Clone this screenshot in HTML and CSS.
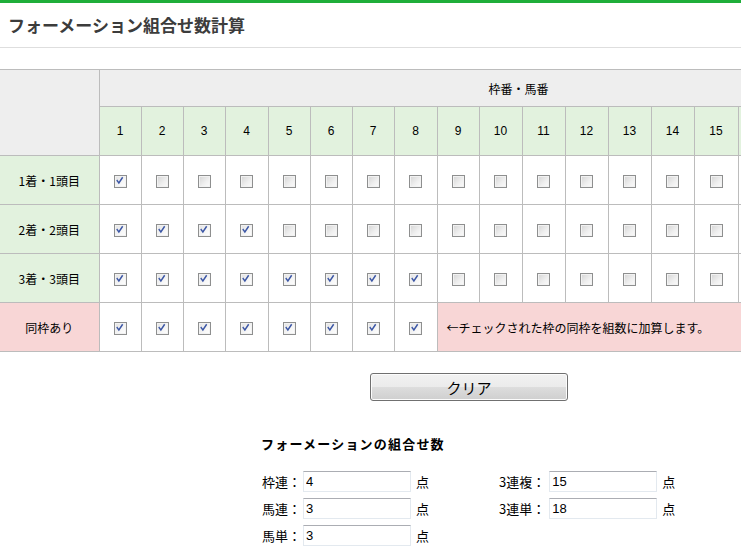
FILE: index.html
```html
<!DOCTYPE html>
<html lang="ja">
<head>
<meta charset="utf-8">
<title>フォーメーション組合せ数計算</title>
<link rel="stylesheet" href="styles.css">
</head>
<body>
<div class="topbar"></div>
<header class="page-head"><h1>フォーメーション組合せ数計算</h1></header>
<main class="page">
  <table class="grid">
    <colgroup>
      <col class="c-label">
      <col class="w42"><col class="w42"><col class="w42"><col class="w43"><col class="w42">
      <col class="w42"><col class="w42"><col class="w43"><col class="w42"><col class="w43">
      <col class="w43"><col class="w43"><col class="w43"><col class="w43"><col class="w44">
      <col class="c-extra"><col class="c-extra"><col class="c-extra">
    </colgroup>
    <thead>
      <tr class="r-head">
        <th class="corner" rowspan="2"></th>
        <th class="caption" colspan="18">枠番・馬番</th>
      </tr>
      <tr class="r-nums">
        <th>1</th><th>2</th><th>3</th><th>4</th><th>5</th><th>6</th><th>7</th><th>8</th><th>9</th>
        <th>10</th><th>11</th><th>12</th><th>13</th><th>14</th><th>15</th><th>16</th><th>17</th><th>18</th>
      </tr>
    </thead>
    <tbody>
      <tr class="r-data">
        <th class="lbl">1着・1頭目</th>
        <td><span class="cb on"><svg viewBox="0 0 13 13"><path d="M3.6 6.4 L5.6 9.2 L9.6 3.2"/></svg></span></td>
        <td><span class="cb"></span></td><td><span class="cb"></span></td><td><span class="cb"></span></td>
        <td><span class="cb"></span></td><td><span class="cb"></span></td><td><span class="cb"></span></td>
        <td><span class="cb"></span></td><td><span class="cb"></span></td><td><span class="cb"></span></td>
        <td><span class="cb"></span></td><td><span class="cb"></span></td><td><span class="cb"></span></td>
        <td><span class="cb"></span></td><td><span class="cb"></span></td><td><span class="cb"></span></td>
        <td><span class="cb"></span></td><td><span class="cb"></span></td>
      </tr>
      <tr class="r-data">
        <th class="lbl">2着・2頭目</th>
        <td><span class="cb on"><svg viewBox="0 0 13 13"><path d="M3.6 6.4 L5.6 9.2 L9.6 3.2"/></svg></span></td>
        <td><span class="cb on"><svg viewBox="0 0 13 13"><path d="M3.6 6.4 L5.6 9.2 L9.6 3.2"/></svg></span></td>
        <td><span class="cb on"><svg viewBox="0 0 13 13"><path d="M3.6 6.4 L5.6 9.2 L9.6 3.2"/></svg></span></td>
        <td><span class="cb on"><svg viewBox="0 0 13 13"><path d="M3.6 6.4 L5.6 9.2 L9.6 3.2"/></svg></span></td>
        <td><span class="cb"></span></td><td><span class="cb"></span></td><td><span class="cb"></span></td>
        <td><span class="cb"></span></td><td><span class="cb"></span></td><td><span class="cb"></span></td>
        <td><span class="cb"></span></td><td><span class="cb"></span></td><td><span class="cb"></span></td>
        <td><span class="cb"></span></td><td><span class="cb"></span></td><td><span class="cb"></span></td>
        <td><span class="cb"></span></td><td><span class="cb"></span></td>
      </tr>
      <tr class="r-data">
        <th class="lbl">3着・3頭目</th>
        <td><span class="cb on"><svg viewBox="0 0 13 13"><path d="M3.6 6.4 L5.6 9.2 L9.6 3.2"/></svg></span></td>
        <td><span class="cb on"><svg viewBox="0 0 13 13"><path d="M3.6 6.4 L5.6 9.2 L9.6 3.2"/></svg></span></td>
        <td><span class="cb on"><svg viewBox="0 0 13 13"><path d="M3.6 6.4 L5.6 9.2 L9.6 3.2"/></svg></span></td>
        <td><span class="cb on"><svg viewBox="0 0 13 13"><path d="M3.6 6.4 L5.6 9.2 L9.6 3.2"/></svg></span></td>
        <td><span class="cb on"><svg viewBox="0 0 13 13"><path d="M3.6 6.4 L5.6 9.2 L9.6 3.2"/></svg></span></td>
        <td><span class="cb on"><svg viewBox="0 0 13 13"><path d="M3.6 6.4 L5.6 9.2 L9.6 3.2"/></svg></span></td>
        <td><span class="cb on"><svg viewBox="0 0 13 13"><path d="M3.6 6.4 L5.6 9.2 L9.6 3.2"/></svg></span></td>
        <td><span class="cb on"><svg viewBox="0 0 13 13"><path d="M3.6 6.4 L5.6 9.2 L9.6 3.2"/></svg></span></td>
        <td><span class="cb"></span></td><td><span class="cb"></span></td><td><span class="cb"></span></td>
        <td><span class="cb"></span></td><td><span class="cb"></span></td><td><span class="cb"></span></td>
        <td><span class="cb"></span></td><td><span class="cb"></span></td><td><span class="cb"></span></td>
        <td><span class="cb"></span></td>
      </tr>
      <tr class="r-data">
        <th class="lbl same">同枠あり</th>
        <td><span class="cb on"><svg viewBox="0 0 13 13"><path d="M3.6 6.4 L5.6 9.2 L9.6 3.2"/></svg></span></td>
        <td><span class="cb on"><svg viewBox="0 0 13 13"><path d="M3.6 6.4 L5.6 9.2 L9.6 3.2"/></svg></span></td>
        <td><span class="cb on"><svg viewBox="0 0 13 13"><path d="M3.6 6.4 L5.6 9.2 L9.6 3.2"/></svg></span></td>
        <td><span class="cb on"><svg viewBox="0 0 13 13"><path d="M3.6 6.4 L5.6 9.2 L9.6 3.2"/></svg></span></td>
        <td><span class="cb on"><svg viewBox="0 0 13 13"><path d="M3.6 6.4 L5.6 9.2 L9.6 3.2"/></svg></span></td>
        <td><span class="cb on"><svg viewBox="0 0 13 13"><path d="M3.6 6.4 L5.6 9.2 L9.6 3.2"/></svg></span></td>
        <td><span class="cb on"><svg viewBox="0 0 13 13"><path d="M3.6 6.4 L5.6 9.2 L9.6 3.2"/></svg></span></td>
        <td><span class="cb on"><svg viewBox="0 0 13 13"><path d="M3.6 6.4 L5.6 9.2 L9.6 3.2"/></svg></span></td>
        <td class="note" colspan="10">←チェックされた枠の同枠を組数に加算します。</td>
      </tr>
    </tbody>
  </table>

  <div class="actions"><button class="btn" type="button">クリア</button></div>

  <section class="result">
    <h2>フォーメーションの組合せ数</h2>
    <div class="fields">
      <div class="field"><span class="f-label">枠連：</span><input class="f-input" value="4"><span class="unit">点</span></div>
      <div class="field alt"><span class="f-label">3連複：</span><input class="f-input" value="15"><span class="unit">点</span></div>
      <div class="field"><span class="f-label">馬連：</span><input class="f-input" value="3"><span class="unit">点</span></div>
      <div class="field alt"><span class="f-label">3連単：</span><input class="f-input" value="18"><span class="unit">点</span></div>
      <div class="field"><span class="f-label">馬単：</span><input class="f-input" value="3"><span class="unit">点</span></div>
    </div>
  </section>
</main>
</body>
</html>
```

FILE: styles.css
```css
html, body {
  margin: 0;
  padding: 0;
}
body {
  width: 741px;
  height: 553px;
  overflow: hidden;
  background: #fff;
  color: #000;
  font-family: "Noto Sans CJK JP", "Noto Sans", sans-serif;
  font-size: 12px;
}
.topbar {
  height: 3px;
  background: #1fae3a;
}
.page-head {
  height: 45px;
  box-sizing: border-box;
  padding: 0 0 2px 8px;
  border-bottom: 1px solid #dedede;
  display: flex;
  align-items: center;
}
.page-head h1 {
  margin: 0;
  font-size: 17px;
  font-weight: bold;
  color: #3c3c3c;
  line-height: 1;
  letter-spacing: 0;
}
.page {
  width: 938px;
  padding-top: 21px;
}
.grid {
  width: 938px;
  table-layout: fixed;
  border-collapse: collapse;
  border-top: 1px solid #bcbcbc;
  border-bottom: 1px solid #bcbcbc;
}
.c-label { width: 99px; }
.w42 { width: 42px; }
.w43 { width: 43px; }
.w44 { width: 44px; }
.c-extra { width: 66.67px; }
.grid th, .grid td {
  border: 1px solid #bcbcbc;
  padding: 0;
  text-align: center;
  vertical-align: middle;
  font-weight: normal;
  font-size: 12px;
}
.r-nums th {
  font-family: "Liberation Sans", "Noto Sans CJK JP", sans-serif;
}
.grid tr > :first-child { border-left: none; }
.corner { background: #eeeeee; }
.caption { background: #eeeeee; }
.r-head { height: 37px; }
.r-nums { height: 49px; }
.r-nums th { background: #e2f2de; }
.r-data { height: 49px; }
.lbl { background: #e2f2de; }
.lbl.same { background: #f8d6d6; }
.note {
  background: #f8d6d6;
  text-align: left !important;
  padding-left: 9px !important;
  font-size: 12px;
}
.cb {
  display: inline-block;
  width: 13px;
  height: 13px;
  box-sizing: border-box;
  border: 1px solid #8e8f8f;
  background: linear-gradient(135deg, #d4d4d4 0%, #f0f0f0 60%, #fbfbfb 100%);
  box-shadow: inset 0 0 0 1px #f2f2f2;
  vertical-align: middle;
  position: relative;
  top: -1px;
}
.cb.on {
  background: linear-gradient(135deg, #e2e2e2 0%, #f6f6f6 60%, #ffffff 100%);
}
.cb svg {
  display: block;
  width: 11px;
  height: 11px;
  margin: 0;
}
.cb svg path {
  fill: none;
  stroke: #3b56a5;
  stroke-width: 1.7;
  stroke-linecap: square;
  transform: translate(-1px, -1px);
}
.actions {
  display: flex;
  justify-content: center;
  padding-top: 21px;
}
.btn {
  width: 198px;
  height: 28px;
  border: 1px solid #707070;
  border-radius: 3px;
  background: linear-gradient(#f2f2f2 0%, #ebebeb 50%, #dddddd 51%, #cfcfcf 100%);
  box-shadow: inset 0 0 0 1px #fcfcfc;
  font-family: "Noto Sans CJK JP", sans-serif;
  font-size: 15px;
  color: #000;
  padding: 0;
  line-height: 1;
}
.result {
  width: 416px;
  margin: 0 auto;
  padding-top: 35px;
}
.result h2 {
  margin: 0 0 19px 0;
  font-size: 13px;
  font-weight: bold;
  letter-spacing: 1.2px;
  line-height: 16px;
}
.fields {
  display: grid;
  grid-template-columns: 237px 1fr;
  row-gap: 6px;
}
.field {
  display: flex;
  align-items: center;
  height: 21px;
  font-size: 13px;
}
.f-label {
  margin-right: 2px;
  padding-left: 1px;
}
.field.alt .f-label {
  margin-right: 4px;
}
.f-input {
  width: 108px;
  height: 21px;
  box-sizing: border-box;
  border: 1px solid #e3e9ef;
  border-top-color: #abadb3;
  padding: 0 2px;
  font-family: "Liberation Sans", sans-serif;
  font-size: 13px;
  color: #000;
  outline: none;
}
.unit {
  margin-left: 5px;
}
```
